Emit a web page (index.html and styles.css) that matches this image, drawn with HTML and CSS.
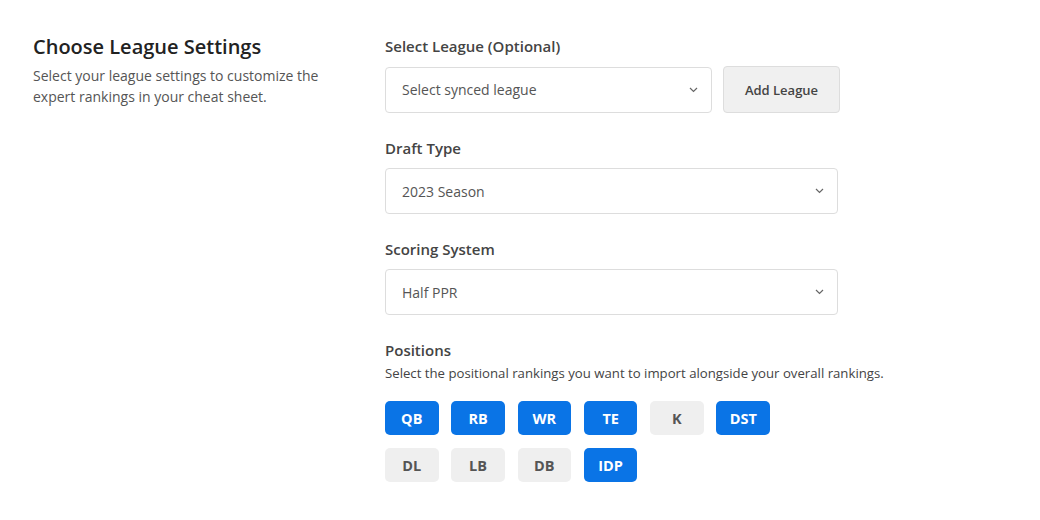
FILE: index.html
```html
<!DOCTYPE html>
<html lang="en">
<head>
<meta charset="utf-8">
<title>Choose League Settings</title>
<link rel="stylesheet" href="styles.css">
</head>
<body>
<div class="page">
  <div class="intro">
    <h2 class="intro-title">Choose League Settings</h2>
    <p class="intro-text">Select your league settings to customize the expert rankings in your cheat sheet.</p>
  </div>
  <div class="form">
    <div class="field">
      <div class="label">Select League (Optional)</div>
      <div class="row">
        <div class="select select-short">
          <span>Select synced league</span>
          <svg class="chev" width="9" height="6" viewBox="0 0 9 6"><path d="M1 1l3.5 3.5L8 1" fill="none" stroke="#666" stroke-width="1.2"/></svg>
        </div>
        <button class="btn-add">Add League</button>
      </div>
    </div>
    <div class="field">
      <div class="label">Draft Type</div>
      <div class="select">
        <span>2023 Season</span>
        <svg class="chev" width="9" height="6" viewBox="0 0 9 6"><path d="M1 1l3.5 3.5L8 1" fill="none" stroke="#666" stroke-width="1.2"/></svg>
      </div>
    </div>
    <div class="field">
      <div class="label">Scoring System</div>
      <div class="select">
        <span>Half PPR</span>
        <svg class="chev" width="9" height="6" viewBox="0 0 9 6"><path d="M1 1l3.5 3.5L8 1" fill="none" stroke="#666" stroke-width="1.2"/></svg>
      </div>
    </div>
    <div class="field">
      <div class="label">Positions</div>
      <div class="hint">Select the positional rankings you want to import alongside your overall rankings.</div>
      <div class="positions">
        <span class="pos on">QB</span>
        <span class="pos on">RB</span>
        <span class="pos on">WR</span>
        <span class="pos on">TE</span>
        <span class="pos">K</span>
        <span class="pos on">DST</span>
        <span class="pos">DL</span>
        <span class="pos">LB</span>
        <span class="pos">DB</span>
        <span class="pos on">IDP</span>
      </div>
    </div>
  </div>
</div>
</body>
</html>
```
FILE: styles.css
```css
* { box-sizing: border-box; }
body {
  margin: 0;
  background: #fff;
  font-family: "Open Sans", "Liberation Sans", sans-serif;
  color: #444;
}
.page {
  display: flex;
  padding: 34px 0 0 33px;
}
.intro {
  width: 352px;
  flex: none;
}
.intro-title {
  margin: 0;
  font-size: 20px;
  line-height: 26px;
  font-weight: 600;
  color: #222;
}
.intro-text {
  margin: 5px 0 0;
  font-size: 14px;
  line-height: 21px;
  color: #555;
  width: 300px;
}
.form {
  width: 520px;
  display: flex;
  flex-direction: column;
  gap: 25px;
  padding-top: 2px;
}
.label {
  font-size: 15px;
  line-height: 20px;
  font-weight: 600;
  color: #444;
  margin-bottom: 10px;
}
.row {
  display: flex;
  gap: 11px;
  align-items: center;
}
.select {
  width: 453px;
  height: 46px;
  border: 1px solid #ddd;
  border-radius: 4px;
  display: flex;
  align-items: center;
  justify-content: space-between;
  padding: 0 13px 0 16px;
  font-size: 14px;
  color: #555;
  background: #fff;
}
.select-short { width: 327px; }
.chev { display: block; }
.btn-add {
  width: 117px;
  height: 47px;
  border: 1px solid #ddd;
  border-radius: 4px;
  background: #f0f0f0;
  font-family: inherit;
  font-size: 13px;
  font-weight: 600;
  color: #444;
}
.hint {
  font-size: 13.2px;
  line-height: 18px;
  color: #444;
  margin-top: -6px;
  white-space: nowrap;
}
.positions {
  margin-top: 19px;
  display: grid;
  grid-template-columns: repeat(6, 53.5px);
  column-gap: 12.8px;
  row-gap: 13px;
}
.pos {
  height: 34px;
  border-radius: 5px;
  background: #efefef;
  color: #555;
  font-size: 14.5px;
  font-weight: 700;
  display: flex;
  align-items: center;
  justify-content: center;
}
.pos.on {
  background: #0a74e6;
  color: #fff;
}
```
